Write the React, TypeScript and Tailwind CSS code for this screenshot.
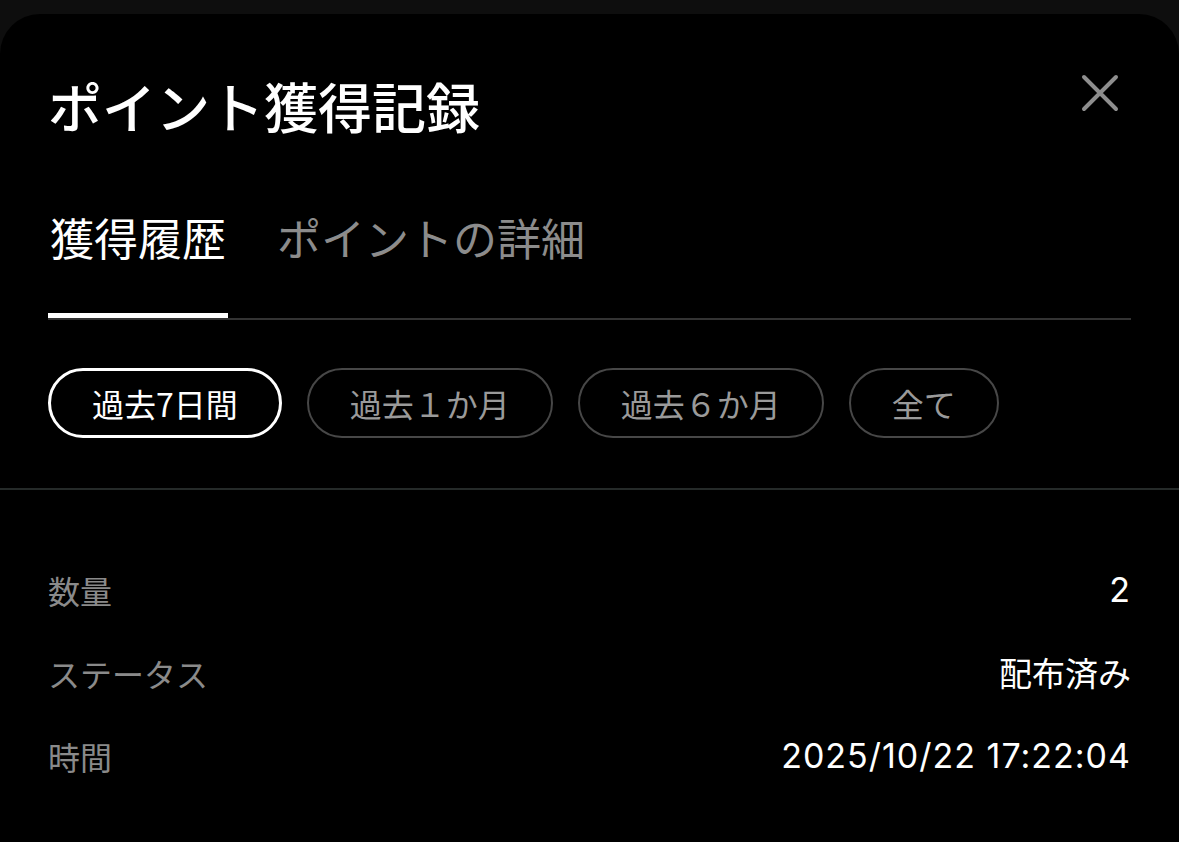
import React from "react";

const periods = ["過去7日間", "過去１か月", "過去６か月", "全て"];

const rows = [
    { label: "数量", value: "2", numeric: true },
    { label: "ステータス", value: "配布済み", numeric: false },
    { label: "時間", value: "2025/10/22 17:22:04", numeric: true },
];

export default function App() {
    return (
        <div
            className="min-h-screen bg-[#0e0e0e] pt-[14px]"
            style={{ fontFamily: '"Noto Sans CJK JP", "Noto Sans", sans-serif' }}
        >
            <div className="min-h-[828px] rounded-t-[40px] bg-black">
                {/* header */}
                <div className="flex items-start justify-between px-12 pt-[59px]">
                    <h1 className="mt-[6px] text-[54px] font-medium leading-none text-white">
                        ポイント獲得記録
                    </h1>
                    <button className="mr-[11px] h-10 w-10 text-[#8e8e8e]">
                        <svg viewBox="0 0 40 40" className="h-10 w-10" fill="none" stroke="currentColor" strokeWidth="4" strokeLinecap="round">
                            <path d="M4 4 L36 36 M36 4 L4 36" />
                        </svg>
                    </button>
                </div>

                {/* tabs */}
                <div className="mx-12 mt-[82px] flex gap-[49px] border-b-2 border-[#333333]">
                    <div className="flex flex-col">
                        <span className="px-[2px] text-[44px] leading-none text-white">獲得履歴</span>
                        <div className="mt-[54px] h-[5px] bg-white" />
                    </div>
                    <div className="flex flex-col">
                        <span className="text-[44px] leading-none text-[#8c8c8c]">ポイントの詳細</span>
                        <div className="mt-[54px] h-[5px]" />
                    </div>
                </div>

                {/* period chips */}
                <div className="flex gap-[25px] px-12 pt-[48px] pb-[50px]">
                    {periods.map((p, i) => (
                        <div
                            key={p}
                            className={
                                i === 0
                                    ? "flex h-[70px] items-center rounded-full border-[3px] border-white px-[41px] text-[32px] leading-none text-white"
                                    : "flex h-[70px] items-center rounded-full border-2 border-[#474747] px-[41px] text-[32px] leading-none text-[#9a9a9a]"
                            }
                        >
                            {p}
                        </div>
                    ))}
                </div>

                <div className="h-[2px] bg-[#252a29]" />

                {/* detail rows */}
                <div className="px-12 pt-[58px]">
                    {rows.map((r) => (
                        <div key={r.label} className="flex h-[83px] items-center justify-between">
                            <span className="text-[32px] leading-none text-[#8a8a8a]">{r.label}</span>
                            {r.numeric ? (
                                <span
                                    className="text-[34px] leading-none tracking-[1px] text-white"
                                    style={{ fontFamily: 'Inter, "Noto Sans CJK JP", sans-serif' }}
                                >
                                    {r.value}
                                </span>
                            ) : (
                                <span className="text-[33px] leading-none text-white">{r.value}</span>
                            )}
                        </div>
                    ))}
                </div>
            </div>
        </div>
    );
}
